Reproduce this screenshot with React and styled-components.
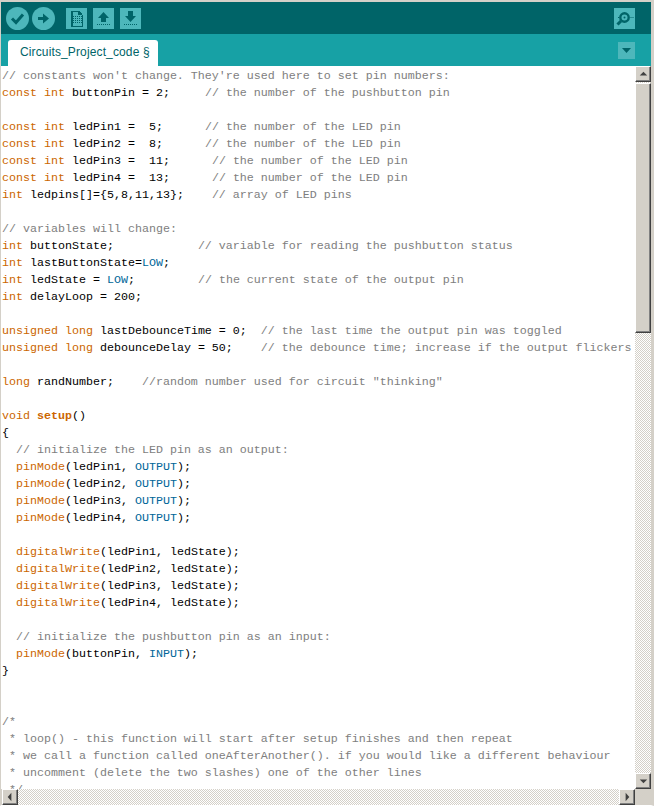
import React from 'react';
import styled, { createGlobalStyle } from 'styled-components';

const Global = createGlobalStyle`
  html, body { margin: 0; padding: 0; background: #fff; }
  #root { width: 654px; height: 806px; overflow: hidden; }
`;

const Window = styled.div`
  width: 654px; height: 806px; box-sizing: border-box;
  display: flex; flex-direction: column;
  background: #d4d0c8;
  border-top: 2px solid #d4d0c8;
  border-right: 3px solid #d4d0c8;
  border-bottom: 1px solid #fff;
  border-left: 1px solid #d4d0c8;
`;
const Toolbar = styled.div`
  height: 32px; flex: none; box-sizing: border-box;
  background: #006468; display: flex; align-items: center;
  padding: 1px 16px 0 5px;
`;
const RoundButton = styled.div`
  width: 23px; height: 23px; border-radius: 50%; background: #4db7bb;
  display: flex; align-items: center; justify-content: center;
  margin-right: ${p => p.$mr}px; color: #006468;
`;
const SquareButton = styled.div`
  width: 21px; height: 21px; background: #4db7bb;
  display: flex; align-items: center; justify-content: center;
  margin-right: ${p => p.$mr}px; margin-left: ${p => p.$auto ? 'auto' : '0'};
`;
const TabBar = styled.div`
  height: 32px; flex: none; box-sizing: border-box;
  background: #17a1a5; display: flex; align-items: flex-end;
  padding: 0 16px 0 7px;
`;
const Tab = styled.div`
  width: 150px; height: 26px; box-sizing: border-box;
  background: #fff; border-radius: 3px 3px 0 0;
  padding: 4px 0 0 12px; color: #006468;
  font: 12px/17px "Liberation Sans", Arial, sans-serif;
  letter-spacing: 0.13px;
  white-space: pre;
`;
const Menu = styled.div`
  width: 17px; height: 17px; margin-left: auto; margin-bottom: 7px;
  background: #4db7bb; display: flex; align-items: center; justify-content: center;
`;
const EditorRow = styled.div`
  flex: 1; min-height: 0; display: flex;
`;
const Code = styled.pre`
  flex: 1; margin: 0; padding: 2px 0 0 1px; background: #fff; overflow: hidden;
  font: 11.67px/17px "Liberation Mono", "Courier New", monospace;
  color: #000;
`;
const Line = styled.div`height: 17px; white-space: pre;`;
const Comment = styled.span`color: #7e7e7e;`;
const Keyword = styled.span`color: #cc6600; font-weight: ${p => p.$bold ? 700 : 400};`;
const Constant = styled.span`color: #006699;`;
const Track = styled.div`
  background: repeating-conic-gradient(#d4d0c8 0 25%, #fff 0 50%) 0 0 / 2px 2px;
`;
const VScroll = styled(Track)`
  width: 16px; flex: none; display: flex; flex-direction: column;
`;
const HRow = styled.div`height: 16px; flex: none; display: flex; padding-left: 1px;`;
const HScroll = styled(Track)`flex: 1; display: flex; justify-content: space-between;`;
const Corner = styled.div`width: 16px; background: #d4d0c8;`;
const Bevel = styled.div`
  box-sizing: border-box; background: #d4d0c8; flex: none;
  border-top: 1px solid #fff; border-left: 1px solid #fff;
  border-right: 1px solid #404040; border-bottom: 1px solid #404040;
  box-shadow: inset -1px -1px 0 #808080;
  display: flex; align-items: center; justify-content: center;
`;
const ArrowButton = styled(Bevel)`width: 16px; height: 16px;`;
const Thumb = styled(Bevel)`width: 16px; height: 250px; margin-top: 1px; margin-bottom: auto;`;
const Spacer = styled.div`flex: 1;`;

const Ico = ({ w = 21, h = 21, children }) => (
  <svg width={w} height={h} viewBox={`0 0 ${w} ${h}`} fill="none" shapeRendering="crispEdges">{children}</svg>
);
const C = '#006468';
const Dots = ({ y = 16 }) => (
  <g fill={C}>{[4,6,8,10,12,14,16].map(x => <rect key={x} x={x} y={y} width="1" height="1" />)}</g>
);

const Arrow = ({ dir }) => {
  const pts = { up: '4,9 12,9 8,5', down: '4,6 12,6 8,10', left: '9,3 9,12 5,7.5', right: '6,3 6,12 10,7.5' }[dir];
  return <svg width="14" height="14" viewBox="0 0 15 15" fill="#404040"><polygon points={pts} /></svg>;
};

const K = Keyword, G = Comment, B = Constant;
const pin = (n, val) => (
  <><K>const</K> <K>int</K>{` ledPin${n} =  ${val};      `}<G>// the number of the LED pin</G></>
);
const mode = n => <>{'  '}<K>pinMode</K>{`(ledPin${n}, `}<B>OUTPUT</B>{');'}</>;
const write = n => <>{'  '}<K>digitalWrite</K>{`(ledPin${n}, ledState);`}</>;

const lines = [
  <G>// constants won't change. They're used here to set pin numbers:</G>,
  <><K>const</K> <K>int</K>{' buttonPin = 2;     '}<G>// the number of the pushbutton pin</G></>,
  '',
  pin(1, '5'), pin(2, '8'), pin(3, '11'), pin(4, '13'),
  <><K>int</K>{' ledpins[]={5,8,11,13};    '}<G>// array of LED pins</G></>,
  '',
  <G>// variables will change:</G>,
  <><K>int</K>{' buttonState;            '}<G>// variable for reading the pushbutton status</G></>,
  <><K>int</K>{' lastButtonState='}<B>LOW</B>;</>,
  <><K>int</K>{' ledState = '}<B>LOW</B>{';         '}<G>// the current state of the output pin</G></>,
  <><K>int</K>{' delayLoop = 200;'}</>,
  '',
  <><K>unsigned</K> <K>long</K>{' lastDebounceTime = 0;  '}<G>// the last time the output pin was toggled</G></>,
  <><K>unsigned</K> <K>long</K>{' debounceDelay = 50;    '}<G>// the debounce time; increase if the output flickers</G></>,
  '',
  <><K>long</K>{' randNumber;    '}<G>//random number used for circuit "thinking"</G></>,
  '',
  <><K>void</K> <K $bold>setup</K>()</>,
  '{',
  <>{'  '}<G>// initialize the LED pin as an output:</G></>,
  mode(1), mode(2), mode(3), mode(4),
  '',
  write(1), write(2), write(3), write(4),
  '',
  <>{'  '}<G>// initialize the pushbutton pin as an input:</G></>,
  <>{'  '}<K>pinMode</K>(buttonPin, <B>INPUT</B>);</>,
  '}',
  '',
  '',
  <G>/*</G>,
  <G>{' * loop() - this function will start after setup finishes and then repeat'}</G>,
  <G>{' * we call a function called oneAfterAnother(). if you would like a different behaviour'}</G>,
  <G>{' * uncomment (delete the two slashes) one of the other lines'}</G>,
  <G>{' */'}</G>,
];

export default function App() {
  return (
    <Window>
      <Global />
      <Toolbar>
        <RoundButton $mr={3}>
          <svg width="15" height="13" viewBox="0 0 15 13" fill="none"><path d="M2 6.5 L6 10.5 L13 2.5" stroke={C} strokeWidth="3" /></svg>
        </RoundButton>
        <RoundButton $mr={11}>
          <svg width="13" height="13" viewBox="0 0 13 13" fill={C}><path d="M1 5h5V1.5L12 6.5 6 11.5V8H1z" /></svg>
        </RoundButton>
        <SquareButton $mr={6}>
          <Ico>
            <path d="M5 3h7l4 4v11H5z" stroke={C} strokeWidth="1" fill="#4db7bb" />
            <path d="M12 3h1l3 3v1h-4z" fill={C} />
            <g fill={C}>{[8,10,12,14].map(y => [7,9,11,13,15].map(x => <rect key={x+'-'+y} x={x} y={y} width="1.4" height="1.4" />))}</g>
            <rect x="6" y="4" width="1" height="14" fill={C} />
          </Ico>
        </SquareButton>
        <SquareButton $mr={6}>
          <Ico>
            <polygon points="10.5,4 16,10 13,10 13,14 8,14 8,10 5,10" fill={C} shapeRendering="auto" />
            <Dots />
          </Ico>
        </SquareButton>
        <SquareButton>
          <Ico>
            <polygon points="8,3 13,3 13,8 16,8 10.5,14 5,8 8,8" fill={C} shapeRendering="auto" />
            <Dots />
          </Ico>
        </SquareButton>
        <SquareButton $auto>
          <svg width="21" height="21" viewBox="0 0 21 21" fill="none">
            <circle cx="10.5" cy="9.5" r="4.2" stroke={C} strokeWidth="2.4" />
            <circle cx="10.5" cy="9.5" r="1" fill={C} />
            <path d="M7 13 L3.5 16.5" stroke={C} strokeWidth="3" />
            <g fill={C}><rect x="4" y="9" width="1" height="1" /><rect x="16.5" y="9" width="1" height="1" /><rect x="18.5" y="9" width="1" height="1" /></g>
          </svg>
        </SquareButton>
      </Toolbar>
      <TabBar>
        <Tab>Circuits_Project_code §</Tab>
        <Menu>
          <svg width="9" height="5" viewBox="0 0 9 5" fill={C}><polygon points="0,0 9,0 4.5,5" /></svg>
        </Menu>
      </TabBar>
      <EditorRow>
        <Code>
          {lines.map((l, i) => <Line key={i}>{l}</Line>)}
        </Code>
        <VScroll>
          <ArrowButton><Arrow dir="up" /></ArrowButton>
          <Thumb />
          <Spacer />
          <ArrowButton><Arrow dir="down" /></ArrowButton>
        </VScroll>
      </EditorRow>
      <HRow>
        <HScroll>
          <ArrowButton><Arrow dir="left" /></ArrowButton>
          <ArrowButton><Arrow dir="right" /></ArrowButton>
        </HScroll>
        <Corner />
      </HRow>
    </Window>
  );
}
